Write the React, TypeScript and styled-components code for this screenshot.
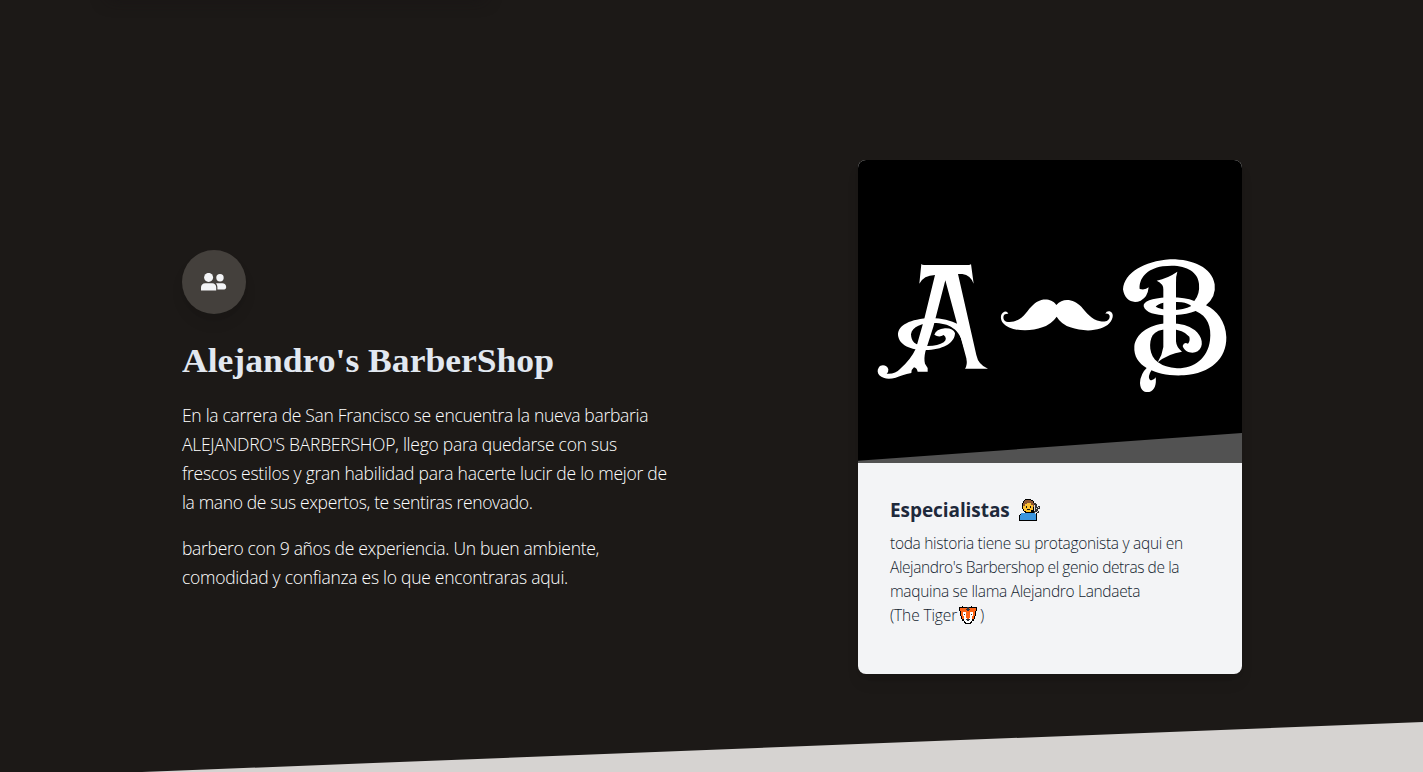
import React from "react";
import styled, { createGlobalStyle } from "styled-components";

const GlobalStyle = createGlobalStyle`
  * { box-sizing: border-box; }
  body {
    margin: 0;
    background: #1c1917;
    overflow: hidden;
    font-family: "Open Sans", "Noto Sans", sans-serif;
  }
  h3, h4, p { margin: 0; }
`;

const Page = styled.div`
  position: relative;
  height: 772px;
  overflow: hidden;
  background: #1c1917;
`;

const PreviousCardShadow = styled.div`
  position: absolute;
  left: 104px;
  top: -40px;
  width: 384px;
  height: 33px;
  border-radius: 8px;
  box-shadow: 0 10px 15px -3px rgba(22, 17, 20, 0.5), 0 4px 6px -2px rgba(0, 0, 0, 0.05);
`;

const About = styled.section`
  display: flex;
  justify-content: space-between;
  align-items: flex-start;
  padding: 160px 181px 0 182px;
`;

const Story = styled.div`
  width: 490px;
  padding-top: 90px;
`;

const IconBadge = styled.div`
  display: flex;
  align-items: center;
  justify-content: center;
  width: 64px;
  height: 64px;
  margin-bottom: 25px;
  border-radius: 50%;
  background: #44403c;
  box-shadow: 0 10px 15px -3px rgba(0, 0, 0, 0.1), 0 4px 6px -2px rgba(0, 0, 0, 0.05);
`;

const Title = styled.h3`
  width: max-content;
  margin-bottom: 16.5px;
  color: #e2e8f0;
  font: 700 33px/45px "Liberation Serif", serif;
  white-space: nowrap;
  transform: scaleX(1.078);
  transform-origin: left;
`;

const Paragraph = styled.p`
  margin-bottom: 16px;
  color: #fff;
  font-size: 17.5px;
  font-weight: 300;
  line-height: 29.25px;
`;

const Line = styled.span<{ $spacing?: number }>`
  display: block;
  white-space: nowrap;
  letter-spacing: ${({ $spacing = 0 }) => $spacing}px;
`;

const Card = styled.article`
  width: 384px;
  height: 514px;
  overflow: hidden;
  border-radius: 8px;
  background: #f3f4f6;
  box-shadow: 0 10px 15px -3px rgba(0, 0, 0, 0.1), 0 4px 6px -2px rgba(0, 0, 0, 0.05);
`;

const Cover = styled.svg`
  display: block;
  width: 384px;
  height: 303px;
  background: #000;
`;

const CardBody = styled.div`
  padding: 32px;
  color: #1e293b;
`;

const CardTitle = styled.h4`
  display: flex;
  align-items: center;
  height: 30px;
  margin-bottom: 5.5px;
  font: 700 19px/30px "Open Sans", sans-serif;
  letter-spacing: -0.07px;
  white-space: nowrap;
`;

const CardText = styled.p`
  font-size: 15.5px;
  font-weight: 300;
  line-height: 24px;
  color: #141e30;
`;

const Slope = styled.svg`
  position: absolute;
  left: 0;
  bottom: 0;
  width: 1423px;
  height: 50px;
`;

const PersonGlyph = styled.svg`
  display: block;
  width: 22px;
  height: 22px;
  margin-left: 9px;
`;

const TigerGlyph = styled.svg`
  display: inline-block;
  width: 20px;
  height: 19px;
  margin: 0 2px 0 1px;
  vertical-align: -4px;
`;

const PeopleIcon = () => (
  <svg width="26" height="18" viewBox="0 0 26 18" fill="#f3f4f6">
    <circle cx="7.6" cy="4.4" r="4.5" />
    <path d="M0 17.5v-3C0 12 1.8 10.3 4.2 10.3h7C13.6 10.3 15.2 12 15.2 14.5v3z" />
    <circle cx="19" cy="4.8" r="3.7" />
    <path d="M15 10.2h6.2c2.4 0 4 1.5 4 3.7 0 1.5-.8 2.5-2 2.5h-6.8v-2c0-1.7-.5-3-1.4-4.2z" />
  </svg>
);

const Person = () => (
  <PersonGlyph viewBox="0 0 22 22" shapeRendering="crispEdges">
    <path d="M6 0h6v1h2v1h1v2h1v7h-1v2h2v1h1v8H0v-6h1v-1h1v-1h4v-1H5v-1H4v-2H3V4h1V2h1V1h1z" fill="#000" />
    <path d="M15 4h2v1h1v3h1v-1h2v3h-2v2h1v2h-2v-1h-1v2h-2z" fill="#333" />
    <path d="M6 4h6v2h2v5h-2v2H7v-1H5v-2H4V7h1V5h1z" fill="#fdc02f" />
    <path d="M6 1h6v1h2v2h1v4h-1V6h-2V4H8v1H6v2H4V4h1V2h1z" fill="#8d5632" />
    <path d="M2 14h14v1h1v6H1v-5h1z" fill="#3b96df" />
    <path d="M7 7h1v2H7zM11 7h1v2h-1zM8 10h3v1H8z" fill="#111" />
    <path d="M15 6h1v6h-1zM17 9h1v1h-1zM19 8h1v1h-1zM18 12h1v1h-1zM16 13h1v2h-1z" fill="#ddd" />
  </PersonGlyph>
);

const Tiger = () => (
  <TigerGlyph viewBox="0 0 20 19" shapeRendering="crispEdges">
    <path d="M1 1h3V0h1v1h8V0h1v1h5v4h-1v5h-1v3h-1v2h-2v2h-1v1H7v-1H6v-2H4v-2H3v-3H2V5H1z" fill="#000" />
    <path d="M2 2h16v3h-1v5h-1v3h-2v2H6v-2H4v-3H3V5H2z" fill="#ff6416" />
    <path d="M5 6h3v4h1v3h2v-3h1V6h3v4h-1v5h-1v1h-1v1H8v-1H7v-1H6v-5H5z" fill="#fff" />
    <path d="M8 5h4v7H8z" fill="#ff6416" />
    <path d="M9 1h2v2h1v1h-1v1H9V4H8V3h1zM6 8h1v1H6zM13 8h1v1h-1zM8 13h4v1h-1v1H9v-1H8z" fill="#30343c" />
  </TigerGlyph>
);

const BarberLogo = () => (
  <Cover viewBox="0 0 384 303" role="img" aria-label="Alejandro's BarberShop">
    <g fill="#fff" transform="translate(7 85) scale(.33333)">
      <path d="M169 57Q172 61 180 60H308Q316 61 318 57L326 116Q317 91 292 87L279 87L334 330Q340 360 369 371H300Q308 361 304 340L241 106L205 245L181 320Q176 342 180 356L188 369V380H158Q155 368 147 367Q139 373 139 384Q110 390 92 398Q61 407 43 391Q34 379 41 368C48 356 67 360 70 373Q71 382 65 386Q91 388 105 372Q137 345 153 310L177 225L210 90Q176 91 163 116Z" />
      <path d="M280 238Q247 220 198 219C135 222 99 240 99 270C102 303 143 317 190 315C241 312 270 290 270 264Q264 249 240 250Q213 253 208 269Q222 279 236 270Q249 281 236 292Q220 303 188 303C149 304 139 290 138 268C141 243 176 233 206 234C251 234 286 251 296 306L307 295Z" />
    </g>
    <g fill="#fff" transform="translate(132 125) scale(.33333)">
      <path d="M199 60C187 44 171 42 154 45C133 51 122 67 108 84C93 104 68 115 49 110C38 106 38 92 45 88Q51 85 55 87Q52 78 43 80C30 85 30 104 39 114C59 139 119 142 157 127Q185 117 200 95Q213 117 241 127C282 142 336 139 358 115C370 101 373 84 359 79Q350 77 346 86Q355 83 359 92C360 107 347 112 331 109C304 104 289 82 274 65C252 43 220 36 199 60Z" />
    </g>
    <g fill="#fff" fillRule="evenodd" transform="translate(252 85) scale(.33333)">
      <path d="M116 127Q106 136 89 132C87 101 109 72 158 64C218 55 264 75 267 117Q270 148 253 168Q221 155 170 157C125 160 99 169 101 184C107 207 150 214 197 210Q231 208 257 198C293 213 305 246 300 286C293 341 251 371 201 370Q164 367 144 352C116 332 116 291 128 271Q143 250 181 253Q220 254 238 275Q241 288 234 296Q222 289 218 303C223 320 246 329 263 319C284 305 277 274 255 256Q226 232 167 235C113 240 77 269 73 304C71 335 86 355 111 370C146 387 175 393 222 391C302 386 350 341 349 277C348 230 319 195 288 181Q319 155 314 118C306 66 246 42 180 43C102 49 43 83 39 133C43 164 67 178 92 167Q113 157 116 127ZM160 173Q183 168 215 172Q235 175 244 183Q219 196 183 195Q151 194 137 185Q143 177 160 173Z" />
      <path d="M202 80Q173 100 140 107Q161 117 160 133V306Q157 329 143 352Q174 326 216 320Q199 307 198 289V115Q197 94 202 80Z" />
      <path d="M112 367Q91 387 90 414C91 437 103 443 118 441C134 437 140 418 137 397Q131 408 120 405Q111 397 125 374Z" />
    </g>
    <path d="M0 300.8L384 273V303H0Z" fill="#525252" />
  </Cover>
);

export default function App() {
  return (
    <>
      <GlobalStyle />
      <Page>
        <PreviousCardShadow />
        <About>
          <Story>
            <IconBadge><PeopleIcon /></IconBadge>
            <Title>Alejandro's BarberShop</Title>
            <Paragraph>
              <Line $spacing={-0.295}>En la carrera de San Francisco se encuentra la nueva barbaria</Line>
              <Line $spacing={-0.26}>ALEJANDRO'S BARBERSHOP, llego para quedarse con sus</Line>
              <Line $spacing={-0.25}>frescos estilos y gran habilidad para hacerte lucir de lo mejor de</Line>
              <Line $spacing={-0.36}>la mano de sus expertos, te sentiras renovado.</Line>
            </Paragraph>
            <Paragraph>
              <Line $spacing={-0.32}>barbero con 9 años de experiencia. Un buen ambiente,</Line>
              <Line $spacing={-0.27}>comodidad y confianza es lo que encontraras aqui.</Line>
            </Paragraph>
          </Story>
          <Card>
            <BarberLogo />
            <CardBody>
              <CardTitle>Especialistas <Person /></CardTitle>
              <CardText>
                <Line $spacing={-0.295}>toda historia tiene su protagonista y aqui en</Line>
                <Line $spacing={-0.42}>Alejandro's Barbershop el genio detras de la</Line>
                <Line $spacing={-0.32}>maquina se llama Alejandro Landaeta</Line>
                <Line $spacing={-0.12}>(The Tiger<Tiger />)</Line>
              </CardText>
            </CardBody>
          </Card>
        </About>
        <Slope viewBox="0 0 1423 50" preserveAspectRatio="none">
          <path d="M142 50L1423 0V50Z" fill="#d6d3d1" />
        </Slope>
      </Page>
    </>
  );
}
